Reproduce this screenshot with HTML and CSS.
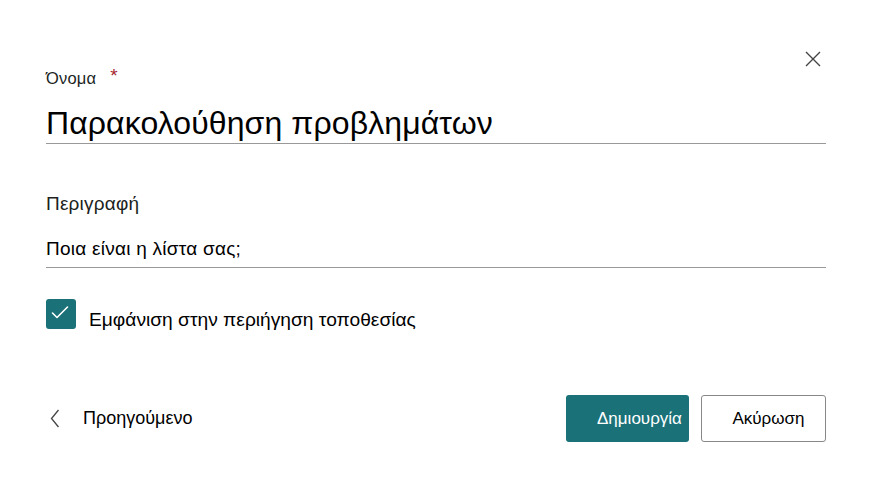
FILE: index.html
```html
<!DOCTYPE html>
<html lang="el">
<head>
<meta charset="utf-8">
<link rel="stylesheet" href="styles.css">
</head>
<body>
<div class="dialog">
  <div class="top">
    <button class="close" aria-label="Κλείσιμο">
      <svg width="16" height="16" viewBox="0 0 16 16"><path d="M1 1L15 15M15 1L1 15" stroke="#444" stroke-width="1.4" fill="none"/></svg>
    </button>
  </div>
  <div class="field name-field">
    <div class="label">Όνομα<span class="req">*</span></div>
    <div class="title-input">Παρακολούθηση προβλημάτων</div>
  </div>
  <div class="field desc-field">
    <div class="label2">Περιγραφή</div>
    <div class="desc-input">Ποια είναι η λίστα σας;</div>
  </div>
  <label class="check">
    <span class="box"><svg width="30" height="30" viewBox="0 0 30 30"><path d="M6.5 14L11 18.5L21.5 8" stroke="#fff" stroke-width="1.6" fill="none" stroke-linecap="round" stroke-linejoin="round"/></svg></span>
    <span class="check-text">Εμφάνιση στην περιήγηση τοποθεσίας</span>
  </label>
  <div class="footer">
    <div class="back">
      <svg width="10" height="19" viewBox="0 0 10 19"><path d="M8.5 1L1.5 9.5L8.5 18" stroke="#444" stroke-width="1.3" fill="none"/></svg>
      <span>Προηγούμενο</span>
    </div>
    <div class="actions">
      <button class="btn primary">Δημιουργία</button>
      <button class="btn secondary">Ακύρωση</button>
    </div>
  </div>
</div>
</body>
</html>
```
FILE: styles.css
```css
* { box-sizing: border-box; }
html, body { margin: 0; padding: 0; background: #fff; }
body { font-family: "Liberation Sans", Arial, sans-serif; color: #000; width: 871px; height: 489px; overflow: hidden; }
.dialog { padding: 0 45px 0 46px; }
.top { display: flex; justify-content: flex-end; padding-top: 51px; height: 67px; margin-right: 5px; }
.close { border: 0; background: none; padding: 0; width: 16px; height: 16px; display: block; }
.close svg { display: block; }
.name-field { margin-top: 1px; }
.label { font-size: 16.5px; color: #201f1e; line-height: 20px; letter-spacing: 0.2px; }
.req { color: #a4262c; margin-left: 14px; font-size: 19px; position: relative; top: -2px; }
.title-input { font-size: 32px; line-height: 39px; margin-top: 16px; border-bottom: 1px solid #999; letter-spacing: 0.1px; }
.desc-field { margin-top: 48px; }
.label2 { font-size: 19px; line-height: 24px; color: #201f1e; letter-spacing: 0.2px; }
.desc-input { font-size: 19px; line-height: 24px; margin-top: 21px; padding-bottom: 6px; border-bottom: 1px solid #999; letter-spacing: 0.25px; }
.check { display: flex; align-items: flex-start; margin-top: 31px; }
.box { width: 30px; height: 30px; border-radius: 3px; background: #1a7178; display: block; flex: none; }
.box svg { display: block; }
.check-text { font-size: 19.2px; line-height: 24px; margin-left: 13px; margin-top: 9px; }
.footer { display: flex; justify-content: space-between; align-items: center; margin-top: 63px; }
.back { display: flex; align-items: center; padding-left: 4px; }
.back svg { display: block; }
.back span { font-size: 18px; margin-left: 23px; }
.actions { display: flex; gap: 12px; }
.btn { font-family: "Liberation Sans", Arial, sans-serif; font-size: 17px; height: 47px; border-radius: 3px; cursor: pointer; }
.primary { width: 123px; background: #1a7178; color: #fff; border: 0; padding: 0 4px 0 31px; text-align: left; }
.secondary { width: 125px; background: #fff; color: #000; border: 1px solid #8a8886; padding: 0 0 0 10px; }
```
